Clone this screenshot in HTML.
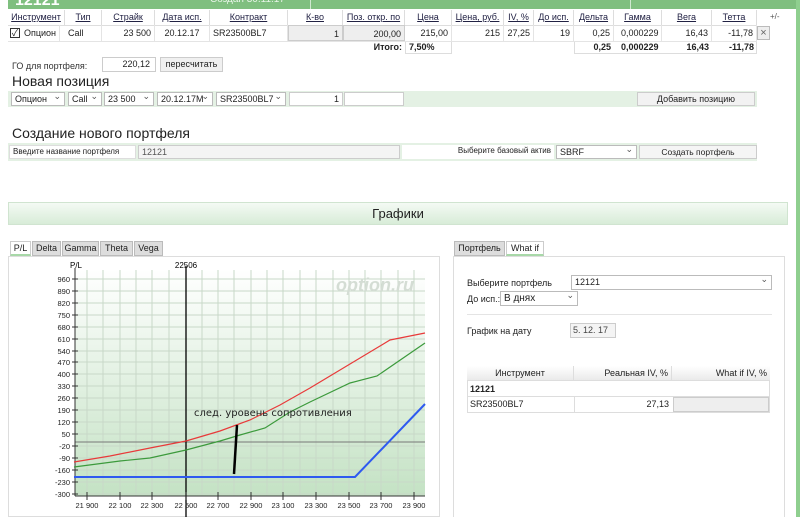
<!DOCTYPE html>
<html><head><meta charset="utf-8"><style>
*{box-sizing:border-box;margin:0;padding:0}
body{width:800px;height:517px;overflow:hidden;background:#fff;font-family:"Liberation Sans","Noto Sans CJK SC",sans-serif;font-size:9px;color:#222;position:relative}
.a{position:absolute}
.th{position:absolute;top:10px;height:15px;line-height:14px;text-align:center;text-decoration:underline;color:#224;border-right:1px solid #ddd;background:#fff;white-space:nowrap}
.td{position:absolute;height:16px;line-height:16px;padding:0 3px;border-right:1px solid #e4e4e4;white-space:nowrap}
.r{text-align:right}
.in{border:1px solid #ccc;background:#fff}
.sel{position:absolute;height:14px;line-height:13px;border:1px solid #bbb;background:#fff;padding-left:3px;font-size:9px}
.sel:after{content:"⌄";position:absolute;right:3px;top:-3px;font-size:9px;color:#555}
</style></head><body>
<div class="a" style="left:8px;top:0;width:788px;height:9px;background:#7fbf7f"></div>
<div class="a" style="left:310px;top:0;width:1px;height:9px;background:#cfe8cf"></div>
<div class="a" style="left:630px;top:0;width:1px;height:9px;background:#cfe8cf"></div>
<div class="a" style="left:15px;top:-8px;color:#fff;font-size:16px;font-weight:bold">12121</div>
<div class="a" style="left:210px;top:-6px;color:#e8f5e8;font-size:10px">Создан 30.11.17</div>
<div class="a" style="left:796px;top:0;width:4px;height:517px;background:#8fcf8f"></div>

<div class="th" style="left:8px;width:57px">Инструмент</div>
<div class="th" style="left:65px;width:37px">Тип</div>
<div class="th" style="left:102px;width:53px">Страйк</div>
<div class="th" style="left:155px;width:55px">Дата исп.</div>
<div class="th" style="left:210px;width:78px">Контракт</div>
<div class="th" style="left:288px;width:55px">К-во</div>
<div class="th" style="left:343px;width:62px">Поз. откр. по</div>
<div class="th" style="left:405px;width:47px">Цена</div>
<div class="th" style="left:452px;width:52px">Цена, руб.</div>
<div class="th" style="left:504px;width:30px">IV, %</div>
<div class="th" style="left:534px;width:40px">До исп.</div>
<div class="th" style="left:574px;width:40px">Дельта</div>
<div class="th" style="left:614px;width:48px">Гамма</div>
<div class="th" style="left:662px;width:50px">Вега</div>
<div class="th" style="left:712px;width:45px">Тетта</div>
<div class="a" style="left:770px;top:10px;line-height:14px;font-size:8px;color:#555">+/-</div>
<div class="a" style="left:8px;top:25px;width:749px;height:1px;background:#ddd"></div>

<div class="a" style="left:10px;top:28px;width:10px;height:10px;border:1px solid #333;font-size:9px;line-height:8px;text-align:center">✓</div>
<div class="td" style="left:21px;top:25px">Опцион</div>
<div class="td" style="left:65px;top:25px;width:37px">Call</div>
<div class="td r" style="left:102px;top:25px;width:53px">23 500</div>
<div class="td" style="left:155px;top:25px;width:55px;text-align:center">20.12.17</div>
<div class="td" style="left:210px;top:25px;width:78px">SR23500BL7</div>
<div class="td r" style="left:288px;top:25px;width:55px;background:#eee;border:1px solid #ccc">1</div>
<div class="td r" style="left:343px;top:25px;width:62px;background:#eee;border:1px solid #ccc">200,00</div>
<div class="td r" style="left:405px;top:25px;width:47px">215,00</div>
<div class="td r" style="left:452px;top:25px;width:52px">215</div>
<div class="td r" style="left:504px;top:25px;width:30px">27,25</div>
<div class="td r" style="left:534px;top:25px;width:40px">19</div>
<div class="td r" style="left:574px;top:25px;width:40px">0,25</div>
<div class="td" style="left:614px;top:25px;width:48px;padding-left:7px">0,000229</div>
<div class="td r" style="left:662px;top:25px;width:50px">16,43</div>
<div class="td r" style="left:712px;top:25px;width:45px">-11,78</div>
<div class="a" style="left:757px;top:26px;width:13px;height:14px;border:1px solid #bbb;background:#eee;text-align:center;line-height:12px;font-size:11px;color:#666">×</div>
<div class="a" style="left:8px;top:41px;width:749px;height:1px;background:#e4e4e4"></div>
<div class="a" style="left:340px;top:42px;width:62px;text-align:right;font-weight:bold;line-height:11px">Итого:</div>
<div class="a" style="left:405px;top:42px;width:47px;height:12px;border:1px solid #ddd;border-top:0;font-weight:bold;line-height:11px;padding-left:3px">7,50%</div>
<div class="a" style="left:574px;top:42px;width:183px;height:12px;border:1px solid #ddd;border-top:0"></div>
<div class="a" style="left:574px;top:42px;width:40px;text-align:right;font-weight:bold;line-height:11px;padding-right:3px">0,25</div>
<div class="a" style="left:621px;top:42px;font-weight:bold;line-height:11px">0,000229</div>
<div class="a" style="left:662px;top:42px;width:50px;text-align:right;font-weight:bold;line-height:11px;padding-right:3px">16,43</div>
<div class="a" style="left:712px;top:42px;width:45px;text-align:right;font-weight:bold;line-height:11px;padding-right:3px">-11,78</div>

<div class="a" style="left:12px;top:60px;line-height:12px;color:#333">ГО для портфеля:</div>
<div class="a in" style="left:102px;top:57px;width:54px;height:15px;text-align:right;padding-right:5px;line-height:13px">220,12</div>
<div class="a" style="left:160px;top:57px;width:63px;height:15px;border:1px solid #ccc;background:#f0f0f0;text-align:center;line-height:13px">пересчитать</div>
<div class="a" style="left:12px;top:73px;font-size:14px;line-height:16px">Новая позиция</div>
<div class="a" style="left:8px;top:91px;width:749px;height:16px;background:#e4f1e4"></div>
<div class="sel" style="left:11px;top:92px;width:54px">Опцион</div>
<div class="sel" style="left:68px;top:92px;width:34px">Call</div>
<div class="sel" style="left:104px;top:92px;width:50px">23 500</div>
<div class="sel" style="left:157px;top:92px;width:56px">20.12.17M</div>
<div class="sel" style="left:216px;top:92px;width:70px">SR23500BL7</div>
<div class="a in" style="left:289px;top:92px;width:54px;height:14px;text-align:right;padding-right:3px;line-height:12px">1</div>
<div class="a in" style="left:344px;top:92px;width:60px;height:14px"></div>
<div class="a" style="left:637px;top:92px;width:118px;height:14px;border:1px solid #ccc;background:#f2f2f2;text-align:center;line-height:12px">Добавить позицию</div>

<div class="a" style="left:12px;top:124px;font-size:14px;line-height:18px">Создание нового портфеля</div>
<div class="a" style="left:8px;top:143px;width:749px;height:18px;background:#e4f1e4"></div>
<div class="a" style="left:9px;top:145px;width:127px;height:14px;background:#fff;border:1px solid #ddd;font-size:8px;line-height:12px;padding-left:3px">Введите название портфеля</div>
<div class="a" style="left:138px;top:145px;width:262px;height:14px;background:#f4f4f4;border:1px solid #ccc;line-height:12px;padding-left:3px;color:#555">12121</div>
<div class="a" style="left:402px;top:145px;width:152px;height:14px;background:#fff;line-height:12px;text-align:right;padding-right:3px;font-size:8px">Выберите базовый актив</div>
<div class="sel" style="left:556px;top:145px;width:81px">SBRF</div>
<div class="a" style="left:639px;top:145px;width:118px;height:14px;border:1px solid #ccc;background:#f5f5f5;text-align:center;line-height:12px;font-size:8.5px">Создать портфель</div>

<div class="a" style="left:8px;top:202px;width:780px;height:23px;background:linear-gradient(#f4faf4,#d8ecd8);border:1px solid #d0e4d0;text-align:center;font-size:13px;line-height:22px">Графики</div>

<div class="a" style="left:10px;top:241px;width:21px;height:15px;background:#fff;border:1px solid #ccc;border-bottom:2px solid #a8d8a8;text-align:center;line-height:13px">P/L</div>
<div class="a" style="left:32px;top:241px;width:29px;height:15px;background:#ddd;border:1px solid #bbb;text-align:center;line-height:13px">Delta</div>
<div class="a" style="left:62px;top:241px;width:37px;height:15px;background:#ddd;border:1px solid #bbb;text-align:center;line-height:13px">Gamma</div>
<div class="a" style="left:100px;top:241px;width:33px;height:15px;background:#ddd;border:1px solid #bbb;text-align:center;line-height:13px">Theta</div>
<div class="a" style="left:134px;top:241px;width:29px;height:15px;background:#ddd;border:1px solid #bbb;text-align:center;line-height:13px">Vega</div>
<div class="a" style="left:8px;top:256px;width:432px;height:261px;border:1px solid #ddd"></div>

<svg class="a" style="left:0;top:256px" width="440" height="261" viewBox="0 256 440 261">
<defs><linearGradient id="g" x1="0" y1="0" x2="0" y2="1"><stop offset="0" stop-color="#fff"/><stop offset="1" stop-color="#c4e2c4"/></linearGradient></defs>
<rect x="75" y="270" width="350" height="226" fill="url(#g)"/>
<g stroke="#c8d8c8" stroke-width="1">
<path d="M87 270V496M103 270V496M120 270V496M136 270V496M152 270V496M169 270V496M186 270V496M202 270V496M218 270V496M234 270V496M251 270V496M267 270V496M283 270V496M300 270V496M316 270V496M333 270V496M349 270V496M365 270V496M381 270V496M398 270V496M414 270V496"/>
<path d="M75 279H425M75 291H425M75 303H425M75 315H425M75 327H425M75 339H425M75 351H425M75 362H425M75 374H425M75 386H425M75 398H425M75 410H425M75 422H425M75 434H425M75 446H425M75 458H425M75 470H425M75 482H425M75 494H425"/>
</g>
<text x="375" y="291" font-family="Liberation Sans" font-size="18" font-weight="bold" font-style="italic" fill="#d4ddd4" text-anchor="middle">option.ru</text>
<line x1="75" y1="442" x2="425" y2="442" stroke="#777" stroke-width="1"/>
<line x1="75" y1="268" x2="75" y2="496" stroke="#333"/>
<line x1="75" y1="496" x2="425" y2="496" stroke="#333"/>
<line x1="186" y1="266" x2="186" y2="517" stroke="#000" stroke-width="1.3"/>
<polyline fill="none" stroke="#e83a3a" stroke-width="1.2" points="74,462 110,456 150,448 186,441 220,431 250,420 280,405 310,388 340,370 360,358 390,340 425,333"/>
<polyline fill="none" stroke="#3c9a3c" stroke-width="1.2" points="74,467 120,461 150,458 186,450 220,441 240,435 265,428 290,412 310,402 350,383 377,376 425,343"/>
<polyline fill="none" stroke="#2f5af0" stroke-width="2" points="74,477 355,477 425,404"/>
<line x1="234" y1="474" x2="237" y2="425" stroke="#000" stroke-width="2.5"/>
<text x="194" y="416" font-family="DejaVu Sans" font-size="10" fill="#222">след. уровень сопротивления</text>
<text x="70" y="268" font-size="8" font-family="Liberation Sans">P/L</text>
<text x="186" y="268" font-size="8" font-family="Liberation Sans" text-anchor="middle">22506</text>
<g font-size="7.5" font-family="Liberation Sans" text-anchor="end" fill="#222">
<text x="70" y="282">960</text><text x="70" y="294">890</text><text x="70" y="306">820</text><text x="70" y="318">750</text><text x="70" y="330">680</text><text x="70" y="342">610</text><text x="70" y="354">540</text><text x="70" y="365">470</text><text x="70" y="377">400</text><text x="70" y="389">330</text><text x="70" y="401">260</text><text x="70" y="413">190</text><text x="70" y="425">120</text><text x="70" y="437">50</text><text x="70" y="449">-20</text><text x="70" y="461">-90</text><text x="70" y="473">-160</text><text x="70" y="485">-230</text><text x="70" y="497">-300</text>
</g>
<g stroke="#333"><path d="M72 279H78M72 291H78M72 303H78M72 315H78M72 327H78M72 339H78M72 351H78M72 362H78M72 374H78M72 386H78M72 398H78M72 410H78M72 422H78M72 434H78M72 446H78M72 458H78M72 470H78M72 482H78M72 494H78"/>
<path d="M87 492V500M120 492V500M152 492V500M186 492V500M218 492V500M251 492V500M283 492V500M316 492V500M349 492V500M381 492V500M414 492V500"/></g>
<g font-size="7.5" font-family="Liberation Sans" text-anchor="middle" fill="#222">
<text x="87" y="508">21 900</text><text x="120" y="508">22 100</text><text x="152" y="508">22 300</text><text x="186" y="508">22 500</text><text x="218" y="508">22 700</text><text x="251" y="508">22 900</text><text x="283" y="508">23 100</text><text x="316" y="508">23 300</text><text x="349" y="508">23 500</text><text x="381" y="508">23 700</text><text x="414" y="508">23 900</text>
</g>
</svg>

<div class="a" style="left:454px;top:241px;width:51px;height:15px;background:#ddd;border:1px solid #bbb;text-align:center;line-height:13px">Портфель</div>
<div class="a" style="left:506px;top:241px;width:38px;height:15px;background:#fff;border:1px solid #ccc;border-bottom:2px solid #a8d8a8;text-align:center;line-height:13px">What if</div>
<div class="a" style="left:453px;top:256px;width:332px;height:261px;border:1px solid #ddd;border-bottom:0"></div>
<div class="a" style="left:467px;top:277px;line-height:12px">Выберите портфель</div>
<div class="sel" style="left:571px;top:275px;width:201px;height:15px">12121</div>
<div class="a" style="left:467px;top:293px;line-height:12px">До исп.:</div>
<div class="sel" style="left:500px;top:291px;width:78px;height:15px;font-size:10px">В днях</div>
<div class="a" style="left:467px;top:314px;width:305px;height:1px;background:#e4e4e4"></div>
<div class="a" style="left:467px;top:325px;line-height:12px">График на дату</div>
<div class="a" style="left:570px;top:323px;width:46px;height:15px;border:1px solid #ccc;background:#f4f4f4;line-height:13px;padding-left:2px;color:#444">5. 12. 17</div>
<div class="a" style="left:467px;top:366px;width:303px;height:47px;border:1px solid #ddd"></div>
<div class="a" style="left:467px;top:366px;width:303px;height:15px;background:linear-gradient(#fff,#eaeaea);border-bottom:1px solid #ddd"></div>
<div class="a" style="left:467px;top:366px;width:107px;line-height:15px;text-align:center;border-right:1px solid #ddd">Инструмент</div>
<div class="a" style="left:574px;top:366px;width:98px;line-height:15px;text-align:right;padding-right:3px;border-right:1px solid #ddd">Реальная IV, %</div>
<div class="a" style="left:672px;top:366px;width:98px;line-height:15px;text-align:right;padding-right:3px">What if IV, %</div>
<div class="a" style="left:470px;top:382px;line-height:14px;font-weight:bold">12121</div>
<div class="a" style="left:467px;top:396px;width:303px;height:1px;background:#ddd"></div>
<div class="a" style="left:470px;top:397px;line-height:15px">SR23500BL7</div>
<div class="a" style="left:574px;top:397px;width:98px;height:16px;line-height:15px;text-align:right;padding-right:3px;border-left:1px solid #ddd">27,13</div>
<div class="a" style="left:673px;top:397px;width:96px;height:15px;background:#eee;border:1px solid #ccc"></div>
</body></html>
